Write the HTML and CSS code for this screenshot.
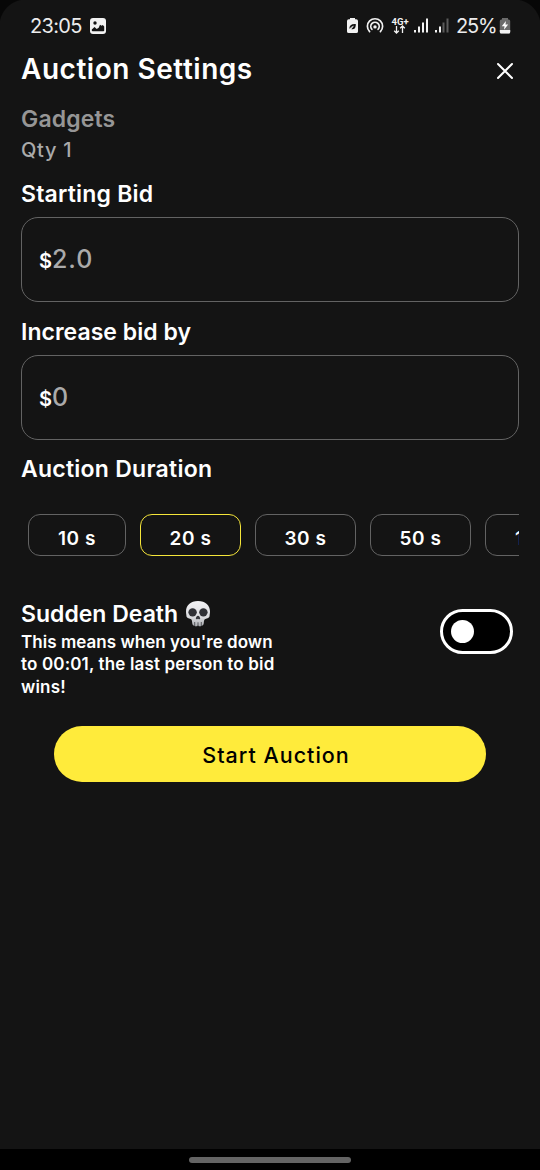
FILE: index.html
```html
<!DOCTYPE html>
<html lang="en">
<head>
<meta charset="utf-8">
<title>Auction Settings</title>
<link rel="stylesheet" href="styles.css">
</head>
<body>
<div class="screen">
  <div class="status">
    <span class="clock">23:05</span>
    <svg class="photo" width="16" height="16" viewBox="0 0 16 16"><rect width="16" height="16" rx="3" fill="#f2f2f2"/><circle cx="5" cy="5" r="1.7" fill="#141414"/><path d="M1.8 12.500V11.500L4.500 9l2.200 2 2-1.200 1.300-3 1.600 1 1.200-.8 1.400 1.500v4q0 .8-.8.8H2.600q-.8 0-.8-.8z" fill="#141414"/></svg>
    <svg class="signals" width="105" height="20" viewBox="0 0 105 20">
      <path d="M4 3.300V2h5v1.300h1.200Q12 3.300 12 5v10.400q0 1.600-1.800 1.600H2.800Q1 17 1 15.400V5q0-1.700 1.800-1.700z" fill="#f2f2f2"/>
      <path d="M3.300 13q0-5.500 6.500-5 .3 6-4.500 5.200L8 10" fill="#141414"/><path d="M3 13.600q2-2.400 4.400-3.500" stroke="#f2f2f2" stroke-width=".8" fill="none"/>
      <g transform="translate(3 0)">
        <g fill="none" stroke="#f2f2f2" stroke-width="1.700" stroke-linecap="round"><path d="M20.600 15.700A7.600 7.600 0 1 1 31.400 15.700"/><path d="M22.900 13.300A4.200 4.200 0 1 1 29.100 13.300"/></g><circle cx="26" cy="10.900" r="1.700" fill="#f2f2f2"/>
        <text class="network" x="42.500" y="8.800">4G+</text>
        <path d="M47.500 10v7m-2.300-2.300l2.300 2.300 2.300-2.300M53.500 17v-7m-2.300 2.300l2.300-2.300 2.300 2.300" stroke="#f2f2f2" stroke-width="1.300" fill="none"/>
        <path d="M65 14h2v2.500h-2zM69 10.500h2v6h-2zM73 6.500h2v10h-2zM77 2.500h2v14h-2zM86 14h2v2.500h-2zM90 10.500h2v6h-2z" fill="#f2f2f2"/><path d="M93.500 6.500h2v10h-2zM97.500 2.500h2v14h-2z" fill="#5b5b5b"/>
      </g>
    </svg>
    <span class="percent">25%</span>
    <svg class="battery" width="12" height="16" viewBox="0 0 12 16"><path d="M3 1.500V0h6v1.500h.7q1.500 0 1.500 1.500v11q0 1.500-1.500 1.500H2.300Q.8 15.500.8 14V3q0-1.500 1.500-1.500z" fill="#6b6b6b"/><path d="M.8 12h10.400v2q0 1.500-1.500 1.500H2.300Q.8 15.500.8 14z" fill="#f2f2f2"/><path d="M6.900 3L2.800 8.200h2.700L5 11.700l4.200-5.100H6.500z" fill="#fff"/></svg>
  </div>

  <main class="content">
    <header class="header">
      <h1 class="title">Auction Settings</h1>
      <svg class="close" width="18" height="18" viewBox="0 0 18 18"><path d="M2 2l14 14M16 2L2 16" stroke="#fff" stroke-width="2" stroke-linecap="round"/></svg>
    </header>
    <div class="product">Gadgets</div>
    <div class="quantity">Qty 1</div>

    <div class="label starting">Starting Bid</div>
    <div class="field"><span class="dollar">$</span><span class="amount">2.0</span></div>
    <div class="label increase">Increase bid by</div>
    <div class="field"><span class="dollar">$</span><span class="amount">0</span></div>
    <div class="label duration">Auction Duration</div>

    <div class="chips">
      <div class="chip first">10 s</div>
      <div class="chip selected">20 s</div>
      <div class="chip">30 s</div>
      <div class="chip">50 s</div>
      <div class="chip last">1</div>
    </div>

    <section class="sudden">
      <div class="rules">
        <div class="sudden-title"><span class="sudden-name">Sudden Death</span>
          <svg class="skull" width="26" height="28" viewBox="0 0 26 28">
            <defs><linearGradient id="bone" x2="0" y2="1"><stop stop-color="#f3f3f5"/><stop offset=".65" stop-color="#d9dadd"/><stop offset="1" stop-color="#a9abb0"/></linearGradient></defs>
            <path d="M13 1C5.500 1 1 5.500 1 11.500c0 2 .4 3 .4 4.300 0 2.200 2.400 2.500 4.200 3.200 1.500.6 1.400 2 1.600 4 .2 2 1 2.700 2 2.700.7 0 1 .7 1.800.7s1-.6 2-.6 1.200.6 2 .6 1.100-.7 1.800-.7c1 0 1.800-.7 2-2.700.2-2 .1-3.400 1.600-4 1.800-.7 4.200-1 4.200-3.200 0-1.300.4-2.300.4-4.300C25 5.500 20.500 1 13 1z" fill="url(#bone)"/>
            <ellipse cx="7.600" cy="12.300" rx="4.200" ry="4.100" fill="#303136"/><ellipse cx="18.400" cy="12.300" rx="4.200" ry="4.100" fill="#303136"/>
            <path d="M13 15.800c-1.200 0-2.200 2-2.200 2.800 0 .9 1.300.8 2.200.1.900.7 2.200.8 2.200-.1 0-.8-1-2.800-2.200-2.800z" fill="#37383d"/>
            <path d="M9.700 22v4M13 22.300v4M16.300 22v4" stroke="#4b4c50" stroke-width=".9"/>
          </svg>
        </div>
        <div class="line one">This means when you're down</div>
        <div class="line two">to 00:01, the last person to bid</div>
        <div class="line three">wins!</div>
      </div>
      <div class="toggle"><div class="knob"></div></div>
    </section>

    <div class="start"><span>Start Auction</span></div>
  </main>

  <div class="navbar"><div class="handle"></div></div>
</div>
</body>
</html>
```
FILE: styles.css
```css
* { box-sizing: border-box; }
body { margin: 0; background: #000; color: #fff; font-family: Inter, sans-serif; }
.screen { width: 540px; height: 1170px; display: flex; flex-direction: column; overflow: hidden; background: radial-gradient(circle at 26px 26px, #141414 26px, #070707 27px) 0 0 / 26px 26px no-repeat, radial-gradient(circle at 0 26px, #141414 26px, #070707 27px) 100% 0 / 26px 26px no-repeat, #141414; white-space: nowrap; }
.status { height: 48px; padding: 4px 28px 0 30px; display: flex; align-items: center; color: #ececec; font-size: 20px; line-height: 44px; }
.clock { flex: none; width: 60px; letter-spacing: -0.7px; }
.photo { flex: none; }
.signals { flex: none; margin-left: 240px; }
.network { font: 700 9.5px Roboto, sans-serif; fill: #f2f2f2; }
.percent { flex: none; margin-left: 5px; width: 43px; letter-spacing: -1.2px; }
.battery { flex: none; }
.content { flex: 1; padding: 0 21px; display: flex; flex-direction: column; }
.header { height: 42px; display: flex; align-items: center; justify-content: space-between; padding-right: 5px; }
.title { margin: 0; font-size: 28px; line-height: 42px; font-weight: 600; letter-spacing: 0.53px; }
.close { margin-top: 4px; }
.product { margin-top: 16px; height: 26px; line-height: 26px; font-size: 23px; font-weight: 600; letter-spacing: 0.15px; color: #969696; }
.quantity { height: 35px; line-height: 36px; font-size: 20px; font-weight: 500; letter-spacing: 0.7px; color: #aaa; }
.label { height: 28px; line-height: 30px; font-size: 23px; font-weight: 600; letter-spacing: 0.2px; }
.starting { margin-top: 12px; }
.increase { margin-top: 15px; letter-spacing: 0.03px; }
.duration { margin-top: 14px; letter-spacing: 0.25px; }
.field { height: 85px; border: 1px solid #636363; border-radius: 17px; padding: 0 0 1px 17px; display: flex; align-items: center; font-size: 25px; }
.starting + .field, .increase + .field { margin-top: 10px; }
.dollar { font-size: 20px; font-weight: 600; padding-top: 3px; }
.amount { color: #aaa; font-weight: 500; letter-spacing: 0.9px; }
.chips { margin-top: 32px; height: 42px; padding-left: 7px; display: flex; gap: 14px; overflow: hidden; }
.chip { flex: none; width: 101px; height: 42px; border: 1px solid #636363; border-radius: 12px; padding-top: 5px; text-align: center; line-height: 37px; font-size: 19px; font-weight: 600; letter-spacing: 0.6px; }
.first { width: 98px; }
.selected { border-color: #f5e53a; }
.last { text-align: left; padding-left: 29px; }
.sudden { margin-top: 42px; height: 99px; display: flex; justify-content: space-between; padding-right: 6px; }
.sudden-title { height: 33px; padding-bottom: 2px; display: flex; align-items: center; gap: 7px; font-size: 23px; font-weight: 600; line-height: 30px; }
.line { height: 22.4px; line-height: 22.4px; font-size: 17px; font-weight: 600; }
.one { letter-spacing: 0.04px; }
.two { letter-spacing: 0.15px; }
.three { letter-spacing: 0.2px; }
.toggle { margin-top: 11px; width: 73px; height: 45px; border: 3px solid #fff; border-radius: 23px; background: #000; display: flex; align-items: center; padding-left: 8px; }
.knob { width: 23px; height: 23px; border-radius: 50%; background: #fff; }
.start { margin: 29px 33px 0; height: 56px; border-radius: 28px; background: #ffeb3b; color: #000; display: flex; align-items: center; justify-content: center; font-size: 21.5px; font-weight: 500; letter-spacing: 1px; padding: 1px 0 0 12px; }
.navbar { height: 21px; background: #000; display: flex; justify-content: center; padding-top: 8px; }
.handle { width: 162px; height: 5.5px; border-radius: 3px; background: #646464; }
```
